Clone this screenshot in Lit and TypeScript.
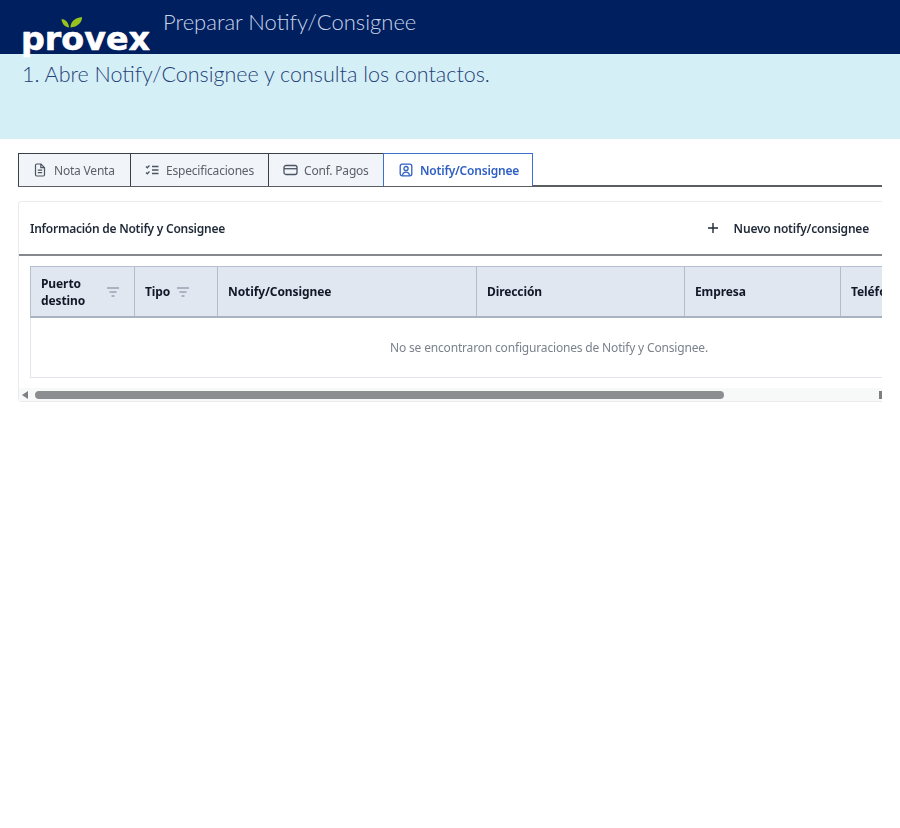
import { LitElement, html, css } from "lit";
import { customElement } from "lit/decorators.js";

const filterIcon = html`<svg class="filter" viewBox="0 0 14 12" width="14" height="12" fill="none" stroke="currentColor" stroke-width="1.4"><path d="M1 2h12M3.5 6h7M5.5 10h3"/></svg>`;

@customElement("app-root")
export class AppRoot extends LitElement {
  static styles = css`
    :host { display: block; width: 900px; height: 828px; background: #fff; overflow: hidden; font-family: "Noto Sans", "Open Sans", sans-serif; }
    .header { position: relative; z-index: 1; height: 54px; background: #001f5f; display: flex; align-items: flex-start; padding-left: 23px; gap: 13px; box-sizing: border-box; }
    .logo { flex: none; margin-top: 17px; width: 127px; height: 40px; overflow: visible; display: block; }
    .logo text { font-family: "DejaVu Sans", sans-serif; font-weight: 700; font-size: 32px; fill: #fff; stroke: #fff; stroke-width: 0.6px; stroke-linejoin: round; }
    .title { font-family: Lato, sans-serif; font-weight: 300; font-size: 22px; line-height: 28px; margin-top: 8px; color: #c9d4e8; white-space: nowrap; }
    .band { height: 85px; background: #d5eff7; box-sizing: border-box; padding: 5px 0 0 22px; font-family: Lato, sans-serif; font-weight: 300; font-size: 21.5px; line-height: 30px; color: #1f3f78; white-space: nowrap; }
    .shot { margin: 14px 18px 0; width: 864px; overflow: hidden; filter: blur(0.4px); }
    .tabs { display: flex; border-bottom: 2px solid #5a5d62; height: 32px; }
    .tab { display: flex; align-items: center; gap: 7px; box-sizing: border-box; height: 33px; padding: 0 0 0 14px; background: #f1f4f9; border: 1px solid #3b4048; border-bottom: none; margin-right: -1px; font-size: 12px; letter-spacing: -0.2px; color: #5b6169; white-space: nowrap; }
    .tab svg { flex: none; color: #4b5563; }
    .tab.pay { gap: 6px; }
    .tab.active { background: #fff; color: #2f5fc4; font-weight: 600; border-color: #3b6fd0; padding-left: 15px; }
    .tab.active svg { color: #2f5fc4; }
    .card { margin-top: 14px; border: 1px solid #e9ebee; border-radius: 4px 0 0 4px; border-right: none; width: 900px; height: 201px; box-sizing: border-box; }
    .card-head { height: 52px; border-bottom: 2px solid #85888c; display: flex; align-items: center; padding-left: 11px; width: 852px; box-sizing: content-box; }
    .card-title { font-size: 12px; font-weight: 600; color: #1f2937; letter-spacing: -0.25px; }
    .new { margin-left: auto; display: flex; align-items: center; gap: 15px; font-size: 12px; letter-spacing: -0.2px; font-weight: 600; color: #1f2937; padding-right: 13px; }
    .wrap { padding: 10px 0 0 11px; width: 852px; overflow: hidden; }
    .table { width: 1038px; border: 1px solid #e2e6ea; box-sizing: border-box; }
    .thead { display: grid; grid-template-columns: 103px 83px 259px 208px 156px 1fr; height: 52px; margin: -1px; background: #e0e7f0; border: 1px solid #b6c0cc; border-bottom: 2px solid #a9b3bf; box-sizing: border-box; }
    .th { display: flex; align-items: center; box-sizing: border-box; padding-left: 10px; border-left: 1px solid #b3bdc9; font-size: 12px; letter-spacing: -0.1px; font-weight: 700; color: #111827; line-height: 17px; gap: 6px; }
    .th:first-child { border-left: none; padding: 0 14px 0 10px; justify-content: space-between; }
    .filter { flex: none; color: #97a3b1; }
    .empty { height: 60px; display: flex; align-items: center; justify-content: center; font-size: 12px; letter-spacing: -0.17px; color: #7a828c; }
    .scroll { display: flex; align-items: center; height: 13px; margin-top: 10px; background: #f7f8f8; width: 863px; }
    .arrow { width: 0; height: 0; border: 4px solid transparent; border-right: 6px solid #7d7f82; border-left: none; margin-left: 3px; flex: none; }
    .thumb { width: 689px; height: 8px; border-radius: 4px; background: #8b8d90; margin-left: 7px; flex: none; }
    .end { margin-left: auto; width: 3px; height: 8px; background: #7d7f82; flex: none; }
  `;

  render() {
    return html`
      <div class="header">
        <svg class="logo" viewBox="0 0 127 40">
          <path d="M46 10.500c-3.600-.4-7-3-7.500-8.500 4 .5 7.200 3.500 7.500 8.500z" fill="#97c31c"/>
          <path d="M47.500 10.500C47.200 4.600 52.500.6 59 0c.4 5.300-4.500 10-11.500 10.500z" fill="#97c31c"/>
          <text x="-2" y="33" textLength="129" lengthAdjust="spacingAndGlyphs">provex</text>
        </svg>
        <div class="title">Preparar Notify/Consignee</div>
      </div>
      <div class="band">1. Abre Notify/Consignee y consulta los contactos.</div>
      <div class="shot">
        <div class="tabs">
          <div class="tab" style="width:113px">
            <svg width="14" height="14" viewBox="0 0 14 14" fill="none" stroke="currentColor" stroke-width="1.2" stroke-linejoin="round"><path d="M2.500 2.200c0-.7.500-1.200 1.200-1.200h4.100l3.700 3.700v7.100c0 .7-.5 1.200-1.200 1.200H3.700c-.7 0-1.200-.5-1.200-1.200z"/><path d="M7.800 1v3.700h3.700M4.800 7.200h4.400M4.800 9.700h4.400"/></svg>
            Nota Venta
          </div>
          <div class="tab" style="width:139px">
            <svg width="14" height="14" viewBox="0 0 14 14" fill="none" stroke="currentColor" stroke-width="1.3"><path d="M1 3.500l1.300 1.300L4.500 2.500M1 9.500l1.300 1.300 2.200-2.300M7 3.500h6.500M7 7h6.500M7 10.500h6.500"/></svg>
            Especificaciones
          </div>
          <div class="tab pay" style="width:116px">
            <svg width="15" height="14" viewBox="0 0 15 14" fill="none" stroke="currentColor" stroke-width="1.3"><rect x="1" y="2.500" width="13" height="9" rx="2"/><path d="M1 5.700h13"/></svg>
            Conf. Pagos
          </div>
          <div class="tab active" style="width:150px">
            <svg width="14" height="14" viewBox="0 0 14 14" fill="none" stroke="currentColor" stroke-width="1.3"><rect x="1.200" y="1.200" width="11.600" height="11.600" rx="2"/><circle cx="7" cy="5.600" r="2.100"/><path d="M3.500 12.500c.3-2.200 1.700-3.300 3.500-3.300s3.200 1.100 3.500 3.300"/></svg>
            Notify/Consignee
          </div>
        </div>
        <div class="card">
          <div class="card-head">
            <div class="card-title">Información de Notify y Consignee</div>
            <div class="new">
              <svg width="12" height="12" viewBox="0 0 12 12" fill="none" stroke="#1f2937" stroke-width="1.4"><path d="M6 1v10M1 6h10"/></svg>
              Nuevo notify/consignee
            </div>
          </div>
          <div class="wrap">
            <div class="table">
              <div class="thead">
                <div class="th"><span>Puerto<br />destino</span>${filterIcon}</div>
                <div class="th">Tipo ${filterIcon}</div>
                <div class="th">Notify/Consignee</div>
                <div class="th">Dirección</div>
                <div class="th">Empresa</div>
                <div class="th">Teléfono</div>
              </div>
              <div class="empty">No se encontraron configuraciones de Notify y Consignee.</div>
            </div>
          </div>
          <div class="scroll">
            <div class="arrow"></div>
            <div class="thumb"></div>
            <div class="end"></div>
          </div>
        </div>
      </div>
    `;
  }
}
